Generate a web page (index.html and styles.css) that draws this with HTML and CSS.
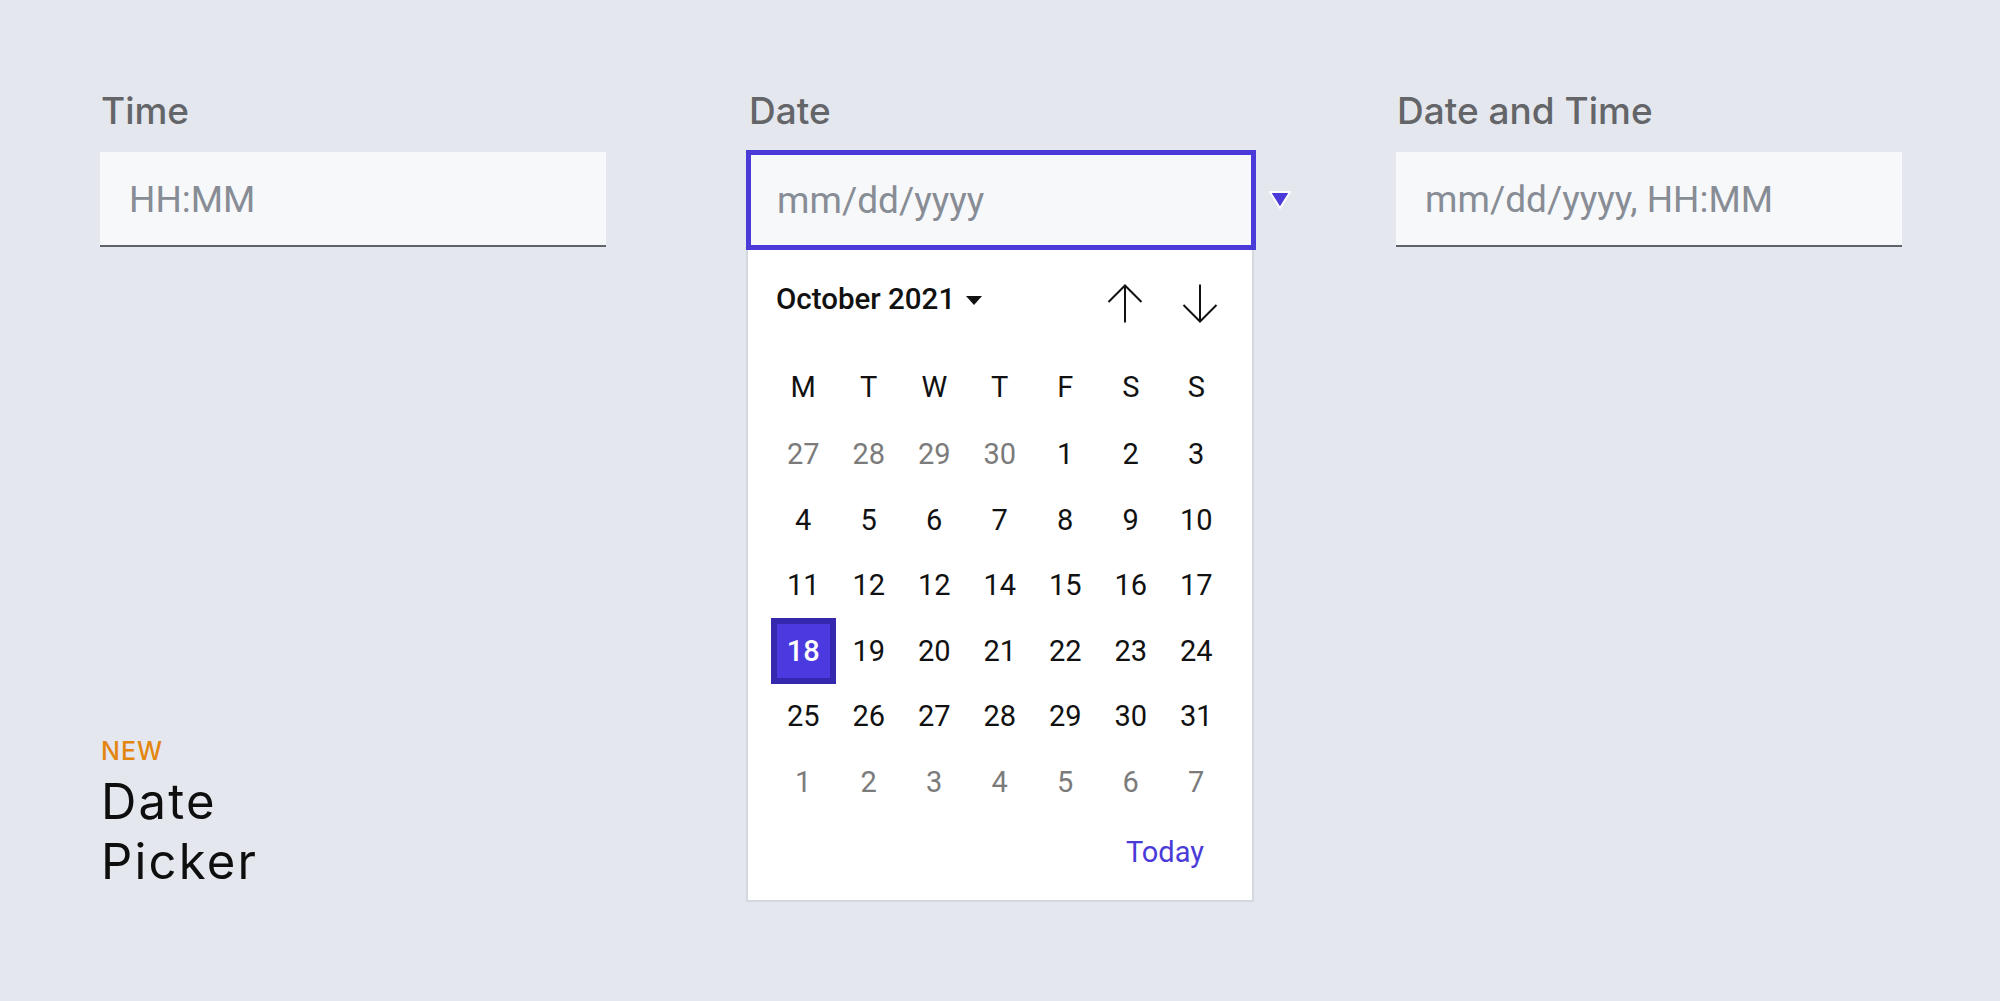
FILE: index.html
```html
<!DOCTYPE html>
<html lang="en">
<head>
<meta charset="utf-8">
<title>Date Picker</title>
<link rel="stylesheet" href="styles.css">
</head>
<body>
<main class="page">
  <section class="col col-time">
    <div class="label">Time</div>
    <div class="input"><span class="ph">HH:MM</span></div>
    <div class="title">
      <div class="badge">NEW</div>
      <div class="heading">Date<br>Picker</div>
    </div>
  </section>

  <section class="col col-date">
    <div class="label">Date</div>
    <div class="field">
      <div class="input focused"><span class="ph">mm/dd/yyyy</span></div>
      <svg class="drop" width="24" height="20" viewBox="0 0 24 20"><path d="M2 2 H22 L12 18 Z" fill="#4a3ad8" stroke="#ffffff" stroke-width="1.8" stroke-linejoin="round"/></svg>
    </div>
    <div class="popup">
      <div class="cal-head">
        <div class="month">October 2021<svg class="caret" width="16" height="9" viewBox="0 0 16 9"><path d="M0 0 H16 L8 9 Z" fill="#111"/></svg></div>
        <div class="nav">
          <svg width="36" height="39" viewBox="0 0 36 39"><path d="M18 1.5 V38.5 M1.5 18 L18 1.5 L34.5 18" fill="none" stroke="#111" stroke-width="2"/></svg>
          <svg width="36" height="39" viewBox="0 0 36 39"><path d="M18 0.5 V37.5 M1.5 21 L18 37.5 L34.5 21" fill="none" stroke="#111" stroke-width="2"/></svg>
        </div>
      </div>
      <div class="grid dow">
        <span>M</span><span>T</span><span>W</span><span>T</span><span>F</span><span>S</span><span>S</span>
      </div>
      <div class="grid days">
        <span class="muted">27</span><span class="muted">28</span><span class="muted">29</span><span class="muted">30</span><span>1</span><span>2</span><span>3</span>
        <span>4</span><span>5</span><span>6</span><span>7</span><span>8</span><span>9</span><span>10</span>
        <span>11</span><span>12</span><span>12</span><span>14</span><span>15</span><span>16</span><span>17</span>
        <span class="sel">18</span><span>19</span><span>20</span><span>21</span><span>22</span><span>23</span><span>24</span>
        <span>25</span><span>26</span><span>27</span><span>28</span><span>29</span><span>30</span><span>31</span>
        <span class="muted">1</span><span class="muted">2</span><span class="muted">3</span><span class="muted">4</span><span class="muted">5</span><span class="muted">6</span><span class="muted">7</span>
      </div>
      <div class="today-row"><span class="today">Today</span></div>
    </div>
  </section>

  <section class="col col-dt">
    <div class="label">Date and Time</div>
    <div class="input"><span class="ph">mm/dd/yyyy, HH:MM</span></div>
  </section>
</main>
</body>
</html>
```

FILE: styles.css
```css
html, body {
  margin: 0;
  padding: 0;
}
body {
  width: 2000px;
  height: 1001px;
  background: #e4e8ee;
  overflow: hidden;
  font-family: Roboto, "Liberation Sans", sans-serif;
}
.page {
  display: grid;
  grid-template-columns: 506px 506px 506px;
  column-gap: 142px;
  align-items: start;
  padding: 88px 0 0 100px;
}
.col {
  display: flex;
  flex-direction: column;
}
.label {
  font-family: Inter, "Liberation Sans", sans-serif;
  font-weight: 500;
  font-size: 37px;
  line-height: 46px;
  color: #646569;
  padding-left: 1px;
  margin-bottom: 18px;
}
.input {
  box-sizing: border-box;
  height: 95px;
  background: #f6f8fa;
  border-bottom: 2px solid #5f636a;
  display: flex;
  align-items: center;
  padding-left: 29px;
  padding-top: 1px;
}
.ph {
  font-family: Roboto, "Liberation Sans", sans-serif;
  font-size: 37px;
  color: #878c95;
}
.field {
  position: relative;
}
.input.focused {
  height: 100px;
  margin: -2px -2px 0 -2px;
  border: 5px solid #4a3ad8;
  padding-left: 26px;
  padding-top: 0;
}
.drop {
  position: absolute;
  left: calc(100% + 14px);
  top: 38px;
}
.popup {
  box-sizing: border-box;
  width: 508px;
  height: 652px;
  margin-left: -2px;
  background: #ffffff;
  border: 2px solid #d3d9e1;
  border-top: none;
  display: flex;
  flex-direction: column;
}
.cal-head {
  height: 98px;
  display: flex;
  align-items: center;
  justify-content: space-between;
  padding: 0 34px 0 28px;
}
.month {
  font-family: Roboto, "Liberation Sans", sans-serif;
  font-weight: 500;
  font-size: 29.5px;
  color: #111;
  display: flex;
  align-items: center;
  gap: 11px;
}
.caret {
  margin-top: 2px;
}
.nav {
  display: flex;
  gap: 39px;
  margin-top: 8px;
}
.nav svg {
  display: block;
}
.grid {
  display: grid;
  grid-template-columns: repeat(7, 65.5px);
  grid-auto-rows: 65.5px;
  padding-left: 22.5px;
}
.grid span {
  display: flex;
  align-items: center;
  justify-content: center;
  font-size: 29px;
  color: #111;
}
.dow {
  margin-top: 6px;
}
.days {
  margin-top: 2px;
}
.days .muted {
  color: #7b7b7b;
}
.days .sel {
  box-sizing: border-box;
  background: #4b3ae0;
  border: 6px solid #3527ae;
  color: #ffffff;
  font-weight: 500;
}
.today-row {
  display: flex;
  justify-content: flex-end;
  padding-right: 48px;
  margin-top: 20px;
}
.today {
  font-size: 29px;
  color: #4a3ad8;
}
.title {
  margin-top: 489px;
  padding-left: 1px;
  font-family: Inter, "Liberation Sans", sans-serif;
}
.badge {
  font-size: 25px;
  line-height: 30px;
  font-weight: 500;
  letter-spacing: 1px;
  color: #e3860f;
  margin-bottom: 6px;
}
.heading {
  font-size: 49px;
  line-height: 60px;
  font-weight: 400;
  letter-spacing: 2.2px;
  color: #0e0e0e;
}
```
